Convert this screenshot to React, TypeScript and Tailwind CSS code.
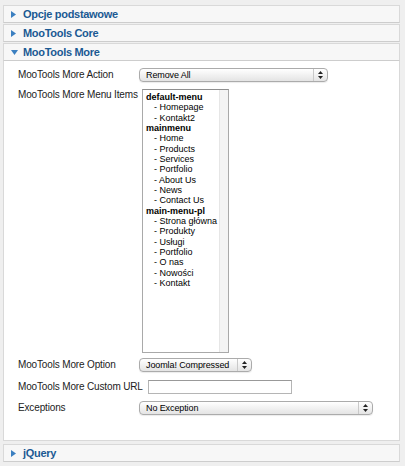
import React from 'react';

const font = { fontFamily: '"Liberation Sans", Arial, sans-serif' };

const menuItems: { text: string; group?: boolean }[] = [
  { text: 'default-menu', group: true },
  { text: 'Homepage' },
  { text: 'Kontakt2' },
  { text: 'mainmenu', group: true },
  { text: 'Home' },
  { text: 'Products' },
  { text: 'Services' },
  { text: 'Portfolio' },
  { text: 'About Us' },
  { text: 'News' },
  { text: 'Contact Us' },
  { text: 'main-menu-pl', group: true },
  { text: 'Strona główna' },
  { text: 'Produkty' },
  { text: 'Usługi' },
  { text: 'Portfolio' },
  { text: 'O nas' },
  { text: 'Nowości' },
  { text: 'Kontakt' },
];

function Toggler({ title, open = false }: { title: string; open?: boolean }) {
  return (
    <div className="h-[18px] border border-[#d9d9d9] border-b-[#cdcdcd] bg-[#f7f7f7] flex items-center pl-[7px]">
      <div className="w-[7px] flex items-center justify-start">
        {open ? (
          <svg width="7" height="5" viewBox="0 0 7 5">
            <polygon points="0,0 7,0 3.5,5" fill="#3b7fc0" />
          </svg>
        ) : (
          <svg width="5" height="7" viewBox="0 0 5 7">
            <polygon points="0,0 5,3.5 0,7" fill="#3b7fc0" />
          </svg>
        )}
      </div>
      <span className="ml-[5px] text-[11px] font-bold tracking-[-0.3px] text-[#1b5a93] leading-none">{title}</span>
    </div>
  );
}

function Select({ value, width }: { value: string; width: string }) {
  return (
    <div
      className={`${width} h-[14px] rounded-[4px] border border-[#ababab] bg-linear-to-b from-white to-[#e4e4e4] flex items-center shadow-[0_1px_1px_rgba(0,0,0,0.08)]`}
    >
      <span className="pl-[6px] text-[9px] tracking-[-0.1px] text-black leading-none">{value}</span>
      <div className="ml-auto h-full w-[14px] border-l border-[#c9c9c9] flex items-center justify-center">
        <svg width="5" height="8" viewBox="0 0 5 8">
          <polygon points="2.5,0 5,3 0,3" fill="#222" />
          <polygon points="0,5 5,5 2.5,8" fill="#222" />
        </svg>
      </div>
    </div>
  );
}

function Label({ children, width = 'w-[121px]' }: { children: React.ReactNode; width?: string }) {
  return <div className={`${width} shrink-0 text-[10px] tracking-[-0.15px] text-[#222] leading-[12px]`}>{children}</div>;
}

export default function App() {
  return (
    <div className="min-h-screen bg-[#efefef] pt-[5px] pl-[3px] pr-[5px]" style={font}>
      <div className="flex flex-col gap-[1px]">
        <Toggler title="Opcje podstawowe" />
        <Toggler title="MooTools Core" />
        <div>
          <Toggler title="MooTools More" open />
          <div className="h-[380px] border border-t-0 border-[#d9d9d9] bg-white pl-[14px] pt-[7px]">
            {/* Action */}
            <div className="flex items-center h-[14px]">
              <Label>MooTools More Action</Label>
              <Select value="Remove All" width="w-[189px]" />
            </div>

            {/* Menu items */}
            <div className="flex mt-[7px]">
              <Label>MooTools More Menu Items</Label>
              <div className="ml-[3px] w-[87px] h-[264px] border border-[#a9a9a9] border-t-[#8f8f8f] bg-white flex">
                <div className="flex-1 pt-[2px] pl-[3px] text-[9px] leading-[10.33px] text-black whitespace-nowrap overflow-hidden">
                  {menuItems.map((m, i) =>
                    m.group ? (
                      <div key={i} className="font-bold">{m.text}</div>
                    ) : (
                      <div key={i} className="pl-[8px]">- {m.text}</div>
                    )
                  )}
                </div>
                <div className="w-[9px] bg-[#f4f4f4] border-l border-[#e6e6e6]" />
              </div>
            </div>

            {/* Option */}
            <div className="flex items-center h-[14px] mt-[5px]">
              <Label>MooTools More Option</Label>
              <Select value="Joomla! Compressed" width="w-[113px]" />
            </div>

            {/* Custom URL */}
            <div className="flex items-center h-[14px] mt-[8px]">
              <Label width="w-[130px]">MooTools More Custom URL</Label>
              <div className="w-[144px] h-[14px] border border-[#b5b5b5] border-t-[#999] bg-white" />
            </div>

            {/* Exceptions */}
            <div className="flex items-center h-[14px] mt-[7px]">
              <Label>Exceptions</Label>
              <Select value="No Exception" width="w-[234px]" />
            </div>
          </div>
        </div>
      </div>
      <div className="mt-[3px]">
        <Toggler title="jQuery" />
      </div>
    </div>
  );
}
